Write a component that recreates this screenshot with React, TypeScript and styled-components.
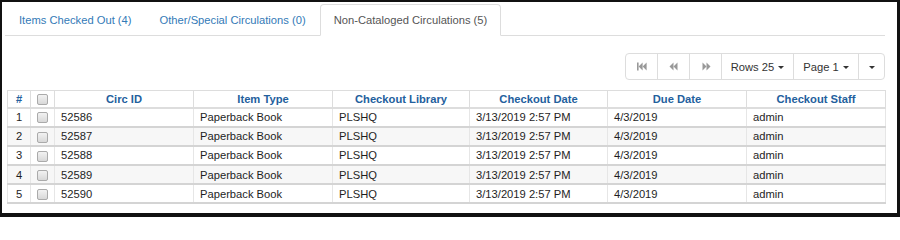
import React from 'react';
import styled, { createGlobalStyle } from 'styled-components';

const GlobalStyle = createGlobalStyle`
  html, body {
    margin: 0;
    padding: 0;
    background: #fff;
  }
  body {
    font-family: "Liberation Sans", Arial, sans-serif;
    font-size: 11.2px;
    color: #333;
  }
`;

const Frame = styled.div`
  box-sizing: border-box;
  width: 900px;
  height: 217px;
  border-style: solid;
  border-color: #111;
  border-width: 2px 3px 4px 2px;
  padding: 2px 12px 0 3px;
  background: #fff;
  overflow: hidden;
`;

const TabBar = styled.ul`
  display: flex;
  margin: 0;
  padding: 0;
  list-style: none;
  border-bottom: 1px solid #ddd;
  height: 32px;
  box-sizing: border-box;
`;

const Tab = styled.li<{ $active?: boolean }>`
  box-sizing: border-box;
  height: 32px;
  margin-bottom: -1px;
  padding: 0 13px;
  display: flex;
  align-items: center;
  font-size: 11.2px;
  color: ${(p) => (p.$active ? '#555' : '#337ab7')};
  background: ${(p) => (p.$active ? '#fff' : 'transparent')};
  border: 1px solid ${(p) => (p.$active ? '#ddd' : 'transparent')};
  border-bottom-color: ${(p) => (p.$active ? '#fff' : 'transparent')};
  border-radius: 4px 4px 0 0;
  white-space: nowrap;
`;

const Content = styled.div`
  padding: 17px 0 0 2px;
`;

const PagerRow = styled.div`
  display: flex;
  justify-content: flex-end;
  margin-bottom: 10px;
`;

const BtnGroup = styled.div`
  display: flex;
  height: 27px;
  box-sizing: border-box;
  border: 1px solid #ddd;
  border-radius: 4px;
  background: #fff;
`;

const PagerBtn = styled.div<{ $w: number }>`
  width: ${(p) => p.$w}px;
  display: flex;
  align-items: center;
  justify-content: center;
  gap: 4px;
  font-size: 11.2px;
  color: #333;
  box-sizing: border-box;
  & + & {
    border-left: 1px solid #ddd;
  }
`;

const Caret = styled.span`
  display: inline-block;
  width: 0;
  height: 0;
  border-left: 3.5px solid transparent;
  border-right: 3.5px solid transparent;
  border-top: 3.5px solid #333;
  margin-top: 1px;
`;

const Table = styled.table`
  width: 878px;
  border-collapse: collapse;
  table-layout: fixed;
  font-size: 11.2px;
`;

const Th = styled.th<{ $w: number }>`
  box-sizing: border-box;
  width: ${(p) => p.$w}px;
  height: 17px;
  padding: 0 6px;
  font-weight: bold;
  color: #23609d;
  text-align: center;
  border: 1px solid #ddd;
  border-bottom: 2px solid #ddd;
`;

const Tr = styled.tr<{ $striped?: boolean }>`
  background: ${(p) => (p.$striped ? '#f7f7f7' : '#fff')};
`;

const Td = styled.td<{ $center?: boolean }>`
  height: 17.2px;
  padding: 0 6px;
  color: #1e1e1e;
  text-align: ${(p) => (p.$center ? 'center' : 'left')};
  border-left: 1px solid #e6e6e6;
  border-right: 1px solid #e6e6e6;
  border-bottom: 2px solid #d4d4d4;
  white-space: nowrap;
  overflow: hidden;
`;

const Check = styled.span`
  display: inline-block;
  width: 11px;
  height: 11px;
  box-sizing: border-box;
  border: 1px solid #aaa;
  border-radius: 2px;
  background: linear-gradient(#f2f2f2, #d8d8d8);
  vertical-align: middle;
`;

const IconGlyph = ({ kind }: { kind: 'first' | 'prev' | 'next' }) => (
  <svg width="10" height="9" viewBox="0 0 10 9" fill="#999">
    {kind === 'first' && (
      <>
        <rect x="0" y="0.5" width="1.6" height="8" />
        <polygon points="1.6,4.5 5.6,0.5 5.6,8.5" />
        <polygon points="5.6,4.5 9.6,0.5 9.6,8.5" />
      </>
    )}
    {kind === 'prev' && (
      <>
        <polygon points="0.5,4.5 4.5,0.5 4.5,8.5" />
        <polygon points="4.5,4.5 8.5,0.5 8.5,8.5" />
      </>
    )}
    {kind === 'next' && (
      <>
        <polygon points="9.5,4.5 5.5,0.5 5.5,8.5" />
        <polygon points="5.5,4.5 1.5,0.5 1.5,8.5" />
      </>
    )}
  </svg>
);

const columns = [
  { label: '#', w: 23 },
  { label: '', w: 24 },
  { label: 'Circ ID', w: 139 },
  { label: 'Item Type', w: 139 },
  { label: 'Checkout Library', w: 137 },
  { label: 'Checkout Date', w: 138 },
  { label: 'Due Date', w: 139 },
  { label: 'Checkout Staff', w: 139 },
];

const rows = [52586, 52587, 52588, 52589, 52590].map((id) => ({
  id,
  type: 'Paperback Book',
  library: 'PLSHQ',
  checkout: '3/13/2019 2:57 PM',
  due: '4/3/2019',
  staff: 'admin',
}));

export default function App() {
  return (
    <>
      <GlobalStyle />
      <Frame>
        <TabBar>
          <Tab>Items Checked Out (4)</Tab>
          <Tab>Other/Special Circulations (0)</Tab>
          <Tab $active>Non-Cataloged Circulations (5)</Tab>
        </TabBar>
        <Content>
          <PagerRow>
            <BtnGroup>
              <PagerBtn $w={31}>
                <IconGlyph kind="first" />
              </PagerBtn>
              <PagerBtn $w={32}>
                <IconGlyph kind="prev" />
              </PagerBtn>
              <PagerBtn $w={32}>
                <IconGlyph kind="next" />
              </PagerBtn>
              <PagerBtn $w={72}>
                Rows 25 <Caret />
              </PagerBtn>
              <PagerBtn $w={65}>
                Page 1 <Caret />
              </PagerBtn>
              <PagerBtn $w={26}>
                <Caret />
              </PagerBtn>
            </BtnGroup>
          </PagerRow>
          <Table>
            <thead>
              <tr>
                {columns.map((c, i) => (
                  <Th key={i} $w={c.w}>
                    {i === 1 ? <Check /> : c.label}
                  </Th>
                ))}
              </tr>
            </thead>
            <tbody>
              {rows.map((r, i) => (
                <Tr key={r.id} $striped={i % 2 === 1}>
                  <Td $center>{i + 1}</Td>
                  <Td $center>
                    <Check />
                  </Td>
                  <Td>{r.id}</Td>
                  <Td>{r.type}</Td>
                  <Td>{r.library}</Td>
                  <Td>{r.checkout}</Td>
                  <Td>{r.due}</Td>
                  <Td>{r.staff}</Td>
                </Tr>
              ))}
            </tbody>
          </Table>
        </Content>
      </Frame>
    </>
  );
}
